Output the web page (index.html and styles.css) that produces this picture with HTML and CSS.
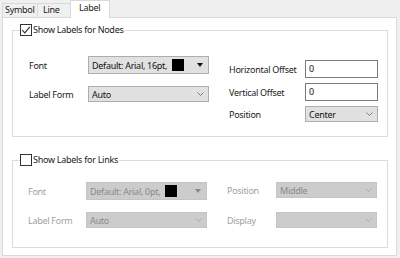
FILE: index.html
```html
<!DOCTYPE html>
<html>
<head>
<meta charset="utf-8">
<link rel="stylesheet" href="styles.css">
</head>
<body>
<div class="tabs">
  <div class="tab">Symbol</div>
  <div class="tab">Line</div>
  <div class="tab active">Label</div>
</div>
<div class="panel">
  <fieldset class="group g1">
    <legend><span class="cb"><svg width="12" height="12" viewBox="0 0 12 12"><polyline points="2.2,6.2 4.8,8.8 9.8,2.8" fill="none" stroke="#333" stroke-width="1.2"/></svg></span>Show Labels for Nodes</legend>
    <div class="cols">
      <div class="col left">
        <div class="row">
          <span class="lbl">Font</span>
          <div class="combo tall"><span class="txt">Default: Arial, 16pt,</span><span class="swatch"></span><span class="tri"></span></div>
        </div>
        <div class="row">
          <span class="lbl">Label Form</span>
          <div class="combo"><span class="txt">Auto</span><span class="chev"><svg width="7" height="4" viewBox="0 0 7 4"><polyline points="0.5,0.5 3.5,3.5 6.5,0.5" fill="none" stroke="#707070" stroke-width="0.9"/></svg></span></div>
        </div>
      </div>
      <div class="col right">
        <div class="row">
          <span class="lbl">Horizontal Offset</span>
          <div class="input">0</div>
        </div>
        <div class="row">
          <span class="lbl">Vertical Offset</span>
          <div class="input">0</div>
        </div>
        <div class="row">
          <span class="lbl">Position</span>
          <div class="combo short"><span class="txt">Center</span><span class="chev"><svg width="7" height="4" viewBox="0 0 7 4"><polyline points="0.5,0.5 3.5,3.5 6.5,0.5" fill="none" stroke="#707070" stroke-width="0.9"/></svg></span></div>
        </div>
      </div>
    </div>
  </fieldset>
  <fieldset class="group g2">
    <legend><span class="cb"></span>Show Labels for Links</legend>
    <div class="cols">
      <div class="col left">
        <div class="row">
          <span class="lbl">Font</span>
          <div class="combo tall dis"><span class="txt">Default: Arial, 0pt,</span><span class="swatch"></span><span class="tri"></span></div>
        </div>
        <div class="row">
          <span class="lbl">Label Form</span>
          <div class="combo dis"><span class="txt">Auto</span><span class="chev"><svg width="7" height="4" viewBox="0 0 7 4"><polyline points="0.5,0.5 3.5,3.5 6.5,0.5" fill="none" stroke="#a8a8a8" stroke-width="0.9"/></svg></span></div>
        </div>
      </div>
      <div class="col right">
        <div class="row">
          <span class="lbl">Position</span>
          <div class="combo wide dis"><span class="txt">Middle</span><span class="chev"><svg width="7" height="4" viewBox="0 0 7 4"><polyline points="0.5,0.5 3.5,3.5 6.5,0.5" fill="none" stroke="#a8a8a8" stroke-width="0.9"/></svg></span></div>
        </div>
        <div class="row">
          <span class="lbl">Display</span>
          <div class="combo wide dis"><span class="txt"></span><span class="chev"><svg width="7" height="4" viewBox="0 0 7 4"><polyline points="0.5,0.5 3.5,3.5 6.5,0.5" fill="none" stroke="#a8a8a8" stroke-width="0.9"/></svg></span></div>
        </div>
      </div>
    </div>
  </fieldset>
</div>
</body>
</html>
```
FILE: styles.css
```css
* { box-sizing: border-box; }
html, body { margin: 0; padding: 0; }
body {
  background: #f0f0f0;
  font-family: "Noto Sans", "Open Sans", sans-serif;
  font-size: 9px;
  letter-spacing: -0.28px;
  color: #1a1a1a;
  width: 400px;
  height: 258px;
  padding: 0 3px 0 2px;
}
.tabs {
  display: flex;
  align-items: flex-end;
  height: 17px;
}
.tab {
  height: 14px;
  border: 1px solid #d9d9d9;
  border-bottom: none;
  border-right: none;
  background: #f0f0f0;
  padding: 0 0 0 2px;
  line-height: 12px;
  white-space: nowrap;
  overflow: hidden;
}
.tab:nth-child(1) { width: 35px; }
.tab:nth-child(2) { width: 33px; padding-left: 5px; }
.tab.active {
  width: 40px;
  height: 18px;
  background: #fff;
  border-right: 1px solid #d9d9d9;
  padding-left: 8px;
  line-height: 13px;
  margin-bottom: -1px;
  position: relative;
  z-index: 1;
}
.panel {
  background: #fff;
  border: 1px solid #d9d9d9;
  height: 239px;
  padding: 6px 8px 0 9px;
}
.group {
  margin: 0;
  padding: 0;
  border: 1px solid #dcdcdc;
  min-width: 0;
}
.group legend {
  margin-left: 7px;
  padding: 0 1px 0 0;
  display: flex;
  align-items: center;
  height: 12px;
  line-height: 12px;
}
.cb {
  width: 12px;
  height: 12px;
  border: 1px solid #333;
  background: #fff;
  display: inline-flex;
  margin-right: 1px;
}
.cb svg { margin: -1px; }
.g1 { height: 113px; }
.g2 { height: 94px; margin-top: 17px; color: #a0a0a0; }
.g2 legend { color: #1a1a1a; }
.cols {
  display: flex;
}
.col { display: flex; flex-direction: column; }
.g1 .left { padding: 20px 0 0 16px; gap: 12px; width: 216px; }
.g1 .right { padding: 24px 0 0 0; gap: 5px; }
.g2 .left { padding: 16px 0 0 15px; gap: 12px; width: 214px; }
.g2 .right { padding: 16px 0 0 0; gap: 14px; }
.row { display: flex; align-items: center; }
.g1 .left .lbl { width: 59px; }
.g1 .right .lbl { width: 76px; }
.g2 .left .lbl { width: 58px; }
.g2 .right .lbl { width: 49px; }
.combo {
  width: 121px;
  height: 16px;
  background: #e1e1e1;
  border: 1px solid #adadad;
  display: flex;
  align-items: center;
  padding-left: 3px;
  color: #111;
}
.combo.tall { height: 18px; }
.combo.short { width: 73px; }
.combo.wide { width: 101px; }
.combo .txt { flex: 1; white-space: nowrap; }
.tall .txt { flex: none; }
.swatch {
  width: 12px;
  height: 12px;
  background: #000;
  margin-left: 5px;
}
.tri {
  margin-left: auto;
  margin-right: 5px;
  width: 0; height: 0;
  border-left: 3.5px solid transparent;
  border-right: 3.5px solid transparent;
  border-top: 4px solid #111;
}
.chev { margin-right: 4px; display: flex; }
.combo.dis {
  background: #cccccc;
  border-color: #c4c4c4;
  color: #8a8a8a;
}
.dis .tri { border-top-color: #8a8a8a; }
.input {
  width: 73px;
  height: 18px;
  border: 1px solid #7a7a7a;
  background: #fff;
  padding-left: 3px;
  line-height: 15px;
  color: #111;
}
```
